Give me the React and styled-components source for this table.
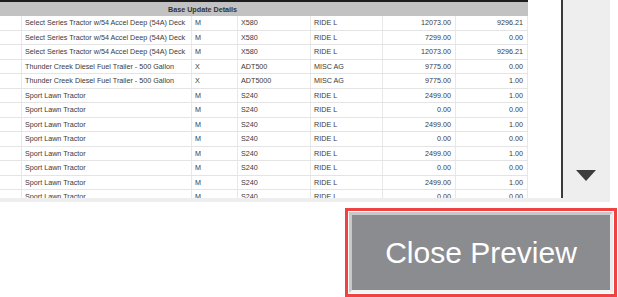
import React from "react";
import styled, { createGlobalStyle } from "styled-components";

const Global = createGlobalStyle`
  html, body { margin: 0; padding: 0; background: #ffffff; }
  body { font-family: "Liberation Sans", Arial, sans-serif; overflow: hidden; }
`;

const Page = styled.div`
  width: 618px;
  height: 297px;
  display: flex;
  flex-direction: column;
`;

const Frame = styled.div`
  width: 610px;
  height: 202px;
  display: flex;
  background: #eeeeee;
  padding-bottom: 4px;
  box-sizing: border-box;
`;

const Viewport = styled.div`
  width: 563px;
  height: 198px;
  background: #ffffff;
  border-right: 2px solid #3a3a3a;
  box-sizing: border-box;
  overflow: hidden;
`;

const ScrollSide = styled.div`
  flex: 1;
  display: flex;
  flex-direction: column;
  justify-content: flex-end;
  align-items: center;
  padding: 0 2px 17px 0;
`;

const DownArrow = styled.div`
  width: 0;
  height: 0;
  border-left: 10px solid transparent;
  border-right: 10px solid transparent;
  border-top: 11px solid #3c3c3c;
`;

const Table = styled.div`
  width: 528px;
  border-top: 2px solid #1c1c1c;
  font-size: 7.2px;
  color: #3a3a3a;
`;

const HeaderRow = styled.div`
  height: 14px;
  background: #c2c2c2;
  display: flex;
  align-items: center;
  padding-left: 168px;
  font-weight: bold;
  color: #333;
`;

const Row = styled.div`
  display: grid;
  grid-template-columns: 22px 170px 46px 73px 72px 73px 72px;
  height: 14.5px;
  box-sizing: border-box;
  border-bottom: 1.5px solid #e4e4e4;
`;

const Cell = styled.div`
  display: flex;
  align-items: center;
  justify-content: ${(p) => (p.$num ? "flex-end" : "flex-start")};
  padding: ${(p) => (p.$num ? "0 4px 0 0" : "0 0 0 3px")};
  border-right: 1.5px solid #e8e8e8;
  white-space: nowrap;
  overflow: hidden;
  box-sizing: border-box;
`;

const Footer = styled.div`
  display: flex;
  justify-content: flex-end;
  padding: 10px 5px 0 0;
`;

const CloseButton = styled.button`
  width: 264px;
  height: 81px;
  box-sizing: border-box;
  background: #8b8c90;
  border: 3px solid;
  border-color: #c8c8c8 #ececec #f4f4f4 #c8c8c8;
  outline: 3px solid #ef4343;
  outline-offset: 1px;
  color: #ffffff;
  font-family: "Liberation Sans", Arial, sans-serif;
  font-size: 30px;
  padding: 0;
  cursor: pointer;
`;

const SELECT = "Select Series Tractor w/54 Accel Deep (54A) Deck";
const THUNDER = "Thunder Creek Diesel Fuel Trailer - 500 Gallon";
const SPORT = "Sport Lawn Tractor";

const rows = [
  [SELECT, "M", "X580", "RIDE L", "12073.00", "9296.21"],
  [SELECT, "M", "X580", "RIDE L", "7299.00", "0.00"],
  [SELECT, "M", "X580", "RIDE L", "12073.00", "9296.21"],
  [THUNDER, "X", "ADT500", "MISC AG", "9775.00", "0.00"],
  [THUNDER, "X", "ADT5000", "MISC AG", "9775.00", "1.00"],
  [SPORT, "M", "S240", "RIDE L", "2499.00", "1.00"],
  [SPORT, "M", "S240", "RIDE L", "0.00", "0.00"],
  [SPORT, "M", "S240", "RIDE L", "2499.00", "1.00"],
  [SPORT, "M", "S240", "RIDE L", "0.00", "0.00"],
  [SPORT, "M", "S240", "RIDE L", "2499.00", "1.00"],
  [SPORT, "M", "S240", "RIDE L", "0.00", "0.00"],
  [SPORT, "M", "S240", "RIDE L", "2499.00", "1.00"],
  [SPORT, "M", "S240", "RIDE L", "0.00", "0.00"],
];

export default function App() {
  return (
    <Page>
      <Global />
      <Frame>
        <Viewport>
          <Table>
            <HeaderRow>Base Update Details</HeaderRow>
            {rows.map((r, i) => (
              <Row key={i}>
                <Cell />
                <Cell>{r[0]}</Cell>
                <Cell>{r[1]}</Cell>
                <Cell>{r[2]}</Cell>
                <Cell>{r[3]}</Cell>
                <Cell $num>{r[4]}</Cell>
                <Cell $num>{r[5]}</Cell>
              </Row>
            ))}
          </Table>
        </Viewport>
        <ScrollSide>
          <DownArrow />
        </ScrollSide>
      </Frame>
      <Footer>
        <CloseButton>Close Preview</CloseButton>
      </Footer>
    </Page>
  );
}
